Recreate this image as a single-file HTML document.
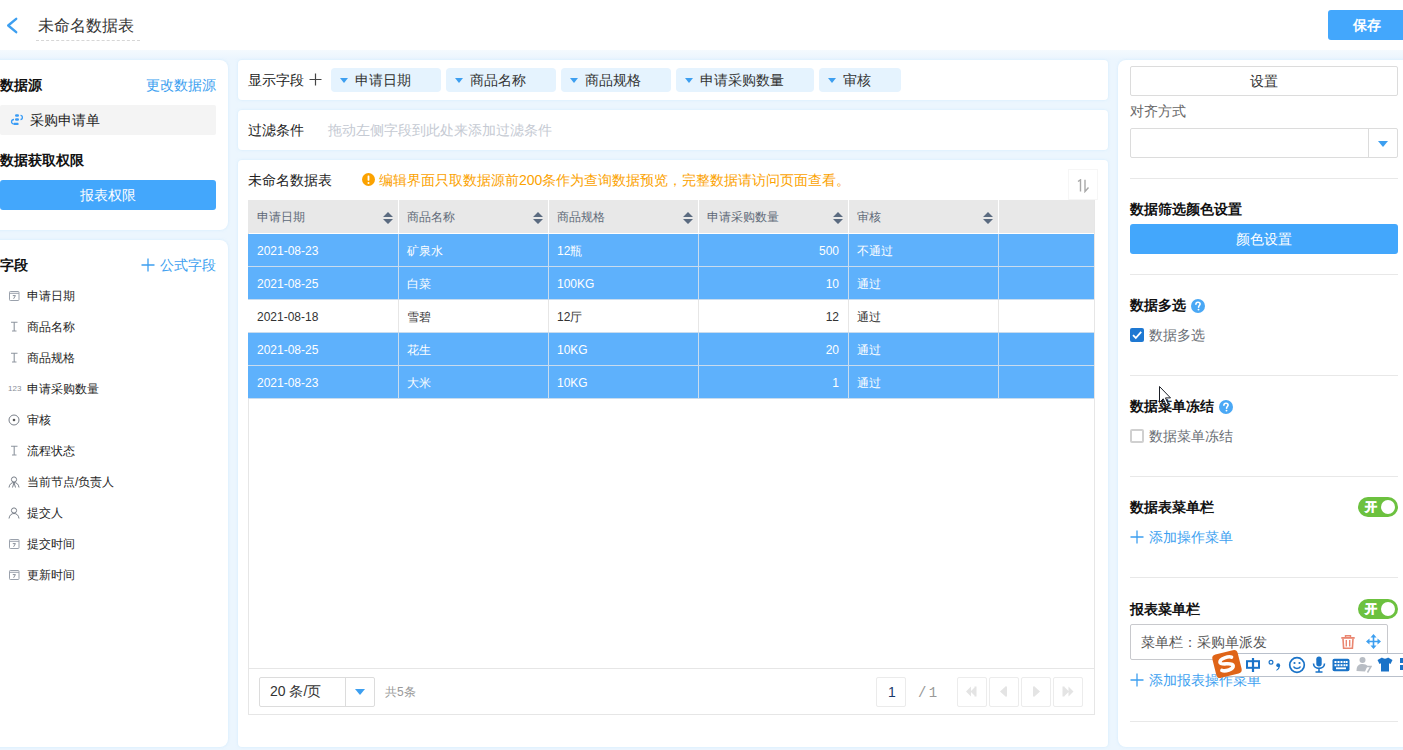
<!DOCTYPE html>
<html><head><meta charset="utf-8">
<style>
*{box-sizing:border-box;margin:0;padding:0}
html,body{width:1403px;height:750px;overflow:hidden}
body{position:relative;background:#ecf6fe;font-family:"Liberation Sans",sans-serif;color:#222;font-size:14px}
.abs{position:absolute}
#hdr{left:0;top:0;width:1403px;height:50px;background:#fff}
.panel{position:absolute;background:#fff;box-shadow:0 0 3px rgba(190,225,252,0.55)}
.t{position:absolute;white-space:nowrap;line-height:1}
.b{font-weight:bold;color:#111 !important}
.blue{color:#3d9ff0}
.btn{position:absolute;background:#43a7fc;color:#fff;border-radius:3px;text-align:center}
.chip{position:absolute;top:68px;height:24px;background:#e5f3fe;border-radius:4px;font-size:14px;line-height:24px;color:#333}
.chip i{position:absolute;left:9px;top:10px;width:0;height:0;border-left:4px solid transparent;border-right:4px solid transparent;border-top:5px solid #3d9ff0}
.chip span{position:absolute;left:24px;top:0}
.fi{position:absolute;left:0;height:20px;font-size:12px;line-height:20px;color:#1f1f1f}
.fi span{position:absolute;left:27px;top:0;white-space:nowrap}
.fi svg{position:absolute;left:8px;top:4px}
table{border-collapse:collapse;table-layout:fixed}
</style></head><body>
<div id="hdr" class="abs">
  <svg class="abs" style="left:6px;top:17px" width="12" height="17" viewBox="0 0 12 17"><path d="M10.2 1.8 L2.2 8.5 L10.2 15.2" fill="none" stroke="#3d9ff0" stroke-width="2.4" stroke-linecap="round" stroke-linejoin="round"/></svg>
  <div class="t" style="left:38px;top:18px;font-size:16px;color:#333">未命名数据表</div>
  <div class="abs" style="left:36px;top:40px;width:104px;border-top:1px dashed #d6d6d6"></div>
  <div class="btn" style="font-weight:bold;left:1328px;top:10px;width:80px;height:30px;line-height:30px;font-size:14px;text-indent:-3px">保存</div>
</div>

<div class="abs" style="left:0;top:50px;width:1403px;height:10px;background:linear-gradient(#f4fafe,#eaf5fe)"></div>
<!-- left panel 1 -->
<div class="panel" style="left:-12px;top:60px;width:240px;height:170px;border-radius:8px"></div>
<div class="t b" style="left:0;top:78px;font-size:14px;color:#222">数据源</div>
<div class="t blue" style="left:146px;top:78px;font-size:14px">更改数据源</div>
<div class="abs" style="left:0;top:105px;width:216px;height:30px;background:#f4f4f4;border-radius:2px"></div>
<svg class="abs" style="left:10px;top:113px" width="14" height="13" viewBox="0 0 14 13"><g fill="#3a9cf5"><rect x="5" y="1.2" width="4" height="2.6" rx="1.2"/><rect x="5" y="5.2" width="4" height="2.6" rx="1.2"/><rect x="3.5" y="9.8" width="5" height="2.2" rx="0.6"/></g><path d="M10.5 2.3 C13 2.3 13 6.5 10.5 6.5 M4 6.5 C0.8 6.5 0.8 10.9 3.5 10.9" fill="none" stroke="#3a9cf5" stroke-width="1.3"/></svg><div class="t" style="left:30px;top:113px;font-size:14px;color:#222">采购申请单</div>
<div class="t b" style="left:0;top:153px;font-size:14px;color:#222">数据获取权限</div>
<div class="btn" style="left:0;top:180px;width:216px;height:30px;line-height:30px;font-size:14px">报表权限</div>

<!-- left panel 2 -->
<div class="panel" style="left:-12px;top:240px;width:240px;height:507px;border-radius:8px"></div>
<div class="t b" style="left:0;top:258px;font-size:14px;color:#222">字段</div>
<svg class="abs" style="left:141px;top:258px" width="14" height="14" viewBox="0 0 14 14"><path d="M7 0.5 V13.5 M0.5 7 H13.5" stroke="#3d9ff0" stroke-width="1.3"/></svg><div class="t blue" style="left:160px;top:258px;font-size:14px">公式字段</div>
<div class="fi" style="top:286px"><svg width="12" height="11" viewBox="0 0 12 11"><rect x="1.5" y="1.5" width="9.5" height="9" rx="0.8" fill="none" stroke="#9aa1ac" stroke-width="1"/><line x1="1.5" y1="3.3" x2="11" y2="3.3" stroke="#9aa1ac" stroke-width="1"/><path d="M4.8 5.6 H7.4 L5.6 8.8" fill="none" stroke="#7d8490" stroke-width="0.9"/></svg><span>申请日期</span></div>
<div class="fi" style="top:317px"><svg width="12" height="11" viewBox="0 0 12 11"><path d="M3 1.2 H9.5 M6.2 1.2 V10 M4 10 H8.5" fill="none" stroke="#8f96a0" stroke-width="1.1"/></svg><span>商品名称</span></div>
<div class="fi" style="top:348px"><svg width="12" height="11" viewBox="0 0 12 11"><path d="M3 1.2 H9.5 M6.2 1.2 V10 M4 10 H8.5" fill="none" stroke="#8f96a0" stroke-width="1.1"/></svg><span>商品规格</span></div>
<div class="fi" style="top:379px"><span style="position:absolute;left:8px;top:0;font-size:8px;color:#8a8f99;letter-spacing:0">123</span><span>申请采购数量</span></div>
<div class="fi" style="top:410px"><svg width="12" height="12" viewBox="0 0 12 12"><circle cx="6" cy="6" r="5" fill="none" stroke="#7a808a" stroke-width="1"/><circle cx="6" cy="6" r="1.3" fill="#555"/></svg><span>审核</span></div>
<div class="fi" style="top:441px"><svg width="12" height="11" viewBox="0 0 12 11"><path d="M3 1.2 H9.5 M6.2 1.2 V10 M4 10 H8.5" fill="none" stroke="#8f96a0" stroke-width="1.1"/></svg><span>流程状态</span></div>
<div class="fi" style="top:472px"><svg width="12" height="12" viewBox="0 0 12 12"><circle cx="6" cy="3.5" r="2.6" fill="none" stroke="#7a808a" stroke-width="1"/><path d="M1 11.5 C1.5 8 3.5 6.5 6 6.5 C8.5 6.5 10.5 8 11 11.5 M6 6.5 L4.5 11.5 M6 6.5 L7.5 11.5" fill="none" stroke="#7a808a" stroke-width="1"/></svg><span>当前节点/负责人</span></div>
<div class="fi" style="top:503px"><svg width="12" height="12" viewBox="0 0 12 12"><circle cx="6" cy="3.5" r="2.6" fill="none" stroke="#7a808a" stroke-width="1"/><path d="M1 11.5 C1.5 8 3.5 6.5 6 6.5 C8.5 6.5 10.5 8 11 11.5" fill="none" stroke="#7a808a" stroke-width="1"/></svg><span>提交人</span></div>
<div class="fi" style="top:534px"><svg width="12" height="11" viewBox="0 0 12 11"><rect x="1.5" y="1.5" width="9.5" height="9" rx="0.8" fill="none" stroke="#9aa1ac" stroke-width="1"/><line x1="1.5" y1="3.3" x2="11" y2="3.3" stroke="#9aa1ac" stroke-width="1"/><path d="M4.8 5.6 H7.4 L5.6 8.8" fill="none" stroke="#7d8490" stroke-width="0.9"/></svg><span>提交时间</span></div>
<div class="fi" style="top:565px"><svg width="12" height="11" viewBox="0 0 12 11"><rect x="1.5" y="1.5" width="9.5" height="9" rx="0.8" fill="none" stroke="#9aa1ac" stroke-width="1"/><line x1="1.5" y1="3.3" x2="11" y2="3.3" stroke="#9aa1ac" stroke-width="1"/><path d="M4.8 5.6 H7.4 L5.6 8.8" fill="none" stroke="#7d8490" stroke-width="0.9"/></svg><span>更新时间</span></div>

<!-- middle -->
<div class="panel" style="left:238px;top:60px;width:870px;height:40px;border-radius:4px"></div>
<div class="t" style="left:248px;top:73px;font-size:14px">显示字段</div><svg class="abs" style="left:309px;top:73px" width="13" height="13" viewBox="0 0 13 13"><path d="M6.5 0.5 V12.5 M0.5 6.5 H12.5" stroke="#444" stroke-width="1.2"/></svg>
<div class="chip" style="left:331px;width:110px"><i></i><span>申请日期</span></div>
<div class="chip" style="left:446px;width:110px"><i></i><span>商品名称</span></div>
<div class="chip" style="left:561px;width:110px"><i></i><span>商品规格</span></div>
<div class="chip" style="left:676px;width:138px"><i></i><span>申请采购数量</span></div>
<div class="chip" style="left:819px;width:82px"><i></i><span>审核</span></div>

<div class="panel" style="left:238px;top:110px;width:870px;height:40px;border-radius:4px"></div>
<div class="t" style="left:248px;top:123px;font-size:14px">过滤条件</div>
<div class="t" style="left:328px;top:123px;font-size:14px;color:#c5cad3">拖动左侧字段到此处来添加过滤条件</div>

<div class="panel" style="left:238px;top:160px;width:870px;height:587px;border-radius:4px"></div>
<div class="t" style="left:248px;top:173px;font-size:14px">未命名数据表</div>
<div class="abs" style="left:248px;top:200px;width:847px;height:515px;border:1px solid #e6e6e6;border-top:none"></div>
<div class="abs" style="left:248px;top:200px;width:846px;height:33px;background:#e8e8e8"></div>
<div class="t" style="left:257px;top:211px;font-size:12px;color:#5f6a78">申请日期</div>
<div class="abs" style="left:383px;top:211px"><svg class="srt" width="10" height="12" viewBox="0 0 10 12"><path d="M5 0 L10 5 H0 Z M0 7 H10 L5 12 Z" fill="#5b6b80"/></svg></div>
<div class="t" style="left:407px;top:211px;font-size:12px;color:#5f6a78">商品名称</div>
<div class="abs" style="left:533px;top:211px"><svg class="srt" width="10" height="12" viewBox="0 0 10 12"><path d="M5 0 L10 5 H0 Z M0 7 H10 L5 12 Z" fill="#5b6b80"/></svg></div>
<div class="t" style="left:557px;top:211px;font-size:12px;color:#5f6a78">商品规格</div>
<div class="abs" style="left:683px;top:211px"><svg class="srt" width="10" height="12" viewBox="0 0 10 12"><path d="M5 0 L10 5 H0 Z M0 7 H10 L5 12 Z" fill="#5b6b80"/></svg></div>
<div class="t" style="left:707px;top:211px;font-size:12px;color:#5f6a78">申请采购数量</div>
<div class="abs" style="left:833px;top:211px"><svg class="srt" width="10" height="12" viewBox="0 0 10 12"><path d="M5 0 L10 5 H0 Z M0 7 H10 L5 12 Z" fill="#5b6b80"/></svg></div>
<div class="t" style="left:857px;top:211px;font-size:12px;color:#5f6a78">审核</div>
<div class="abs" style="left:983px;top:211px"><svg class="srt" width="10" height="12" viewBox="0 0 10 12"><path d="M5 0 L10 5 H0 Z M0 7 H10 L5 12 Z" fill="#5b6b80"/></svg></div>
<div class="abs" style="left:398px;top:200px;width:1px;height:33px;background:#fff"></div>
<div class="abs" style="left:548px;top:200px;width:1px;height:33px;background:#fff"></div>
<div class="abs" style="left:698px;top:200px;width:1px;height:33px;background:#fff"></div>
<div class="abs" style="left:848px;top:200px;width:1px;height:33px;background:#fff"></div>
<div class="abs" style="left:998px;top:200px;width:1px;height:33px;background:#fff"></div>
<div class="abs" style="left:248px;top:234px;width:846px;height:32px;background:#5eb1fc"></div>
<div class="t" style="left:257px;top:245px;font-size:12px;color:#fff">2021-08-23</div>
<div class="t" style="left:407px;top:245px;font-size:12px;color:#fff">矿泉水</div>
<div class="t" style="left:557px;top:245px;font-size:12px;color:#fff">12瓶</div>
<div class="t" style="left:698px;width:141px;text-align:right;top:245px;font-size:12px;color:#fff">500</div>
<div class="t" style="left:857px;top:245px;font-size:12px;color:#fff">不通过</div>
<div class="abs" style="left:398px;top:234px;width:1px;height:32px;background:#c9dcee"></div>
<div class="abs" style="left:548px;top:234px;width:1px;height:32px;background:#c9dcee"></div>
<div class="abs" style="left:698px;top:234px;width:1px;height:32px;background:#c9dcee"></div>
<div class="abs" style="left:848px;top:234px;width:1px;height:32px;background:#c9dcee"></div>
<div class="abs" style="left:998px;top:234px;width:1px;height:32px;background:#c9dcee"></div>
<div class="abs" style="left:248px;top:266px;width:846px;height:1px;background:#c9dcee"></div>
<div class="abs" style="left:248px;top:267px;width:846px;height:32px;background:#5eb1fc"></div>
<div class="t" style="left:257px;top:278px;font-size:12px;color:#fff">2021-08-25</div>
<div class="t" style="left:407px;top:278px;font-size:12px;color:#fff">白菜</div>
<div class="t" style="left:557px;top:278px;font-size:12px;color:#fff">100KG</div>
<div class="t" style="left:698px;width:141px;text-align:right;top:278px;font-size:12px;color:#fff">10</div>
<div class="t" style="left:857px;top:278px;font-size:12px;color:#fff">通过</div>
<div class="abs" style="left:398px;top:267px;width:1px;height:32px;background:#c9dcee"></div>
<div class="abs" style="left:548px;top:267px;width:1px;height:32px;background:#c9dcee"></div>
<div class="abs" style="left:698px;top:267px;width:1px;height:32px;background:#c9dcee"></div>
<div class="abs" style="left:848px;top:267px;width:1px;height:32px;background:#c9dcee"></div>
<div class="abs" style="left:998px;top:267px;width:1px;height:32px;background:#c9dcee"></div>
<div class="abs" style="left:248px;top:299px;width:846px;height:1px;background:#c9dcee"></div>
<div class="abs" style="left:248px;top:300px;width:846px;height:32px;background:#fff"></div>
<div class="t" style="left:257px;top:311px;font-size:12px;color:#333">2021-08-18</div>
<div class="t" style="left:407px;top:311px;font-size:12px;color:#333">雪碧</div>
<div class="t" style="left:557px;top:311px;font-size:12px;color:#333">12厅</div>
<div class="t" style="left:698px;width:141px;text-align:right;top:311px;font-size:12px;color:#333">12</div>
<div class="t" style="left:857px;top:311px;font-size:12px;color:#333">通过</div>
<div class="abs" style="left:398px;top:300px;width:1px;height:32px;background:#e6e6e6"></div>
<div class="abs" style="left:548px;top:300px;width:1px;height:32px;background:#e6e6e6"></div>
<div class="abs" style="left:698px;top:300px;width:1px;height:32px;background:#e6e6e6"></div>
<div class="abs" style="left:848px;top:300px;width:1px;height:32px;background:#e6e6e6"></div>
<div class="abs" style="left:998px;top:300px;width:1px;height:32px;background:#e6e6e6"></div>
<div class="abs" style="left:248px;top:332px;width:846px;height:1px;background:#c9dcee"></div>
<div class="abs" style="left:248px;top:333px;width:846px;height:32px;background:#5eb1fc"></div>
<div class="t" style="left:257px;top:344px;font-size:12px;color:#fff">2021-08-25</div>
<div class="t" style="left:407px;top:344px;font-size:12px;color:#fff">花生</div>
<div class="t" style="left:557px;top:344px;font-size:12px;color:#fff">10KG</div>
<div class="t" style="left:698px;width:141px;text-align:right;top:344px;font-size:12px;color:#fff">20</div>
<div class="t" style="left:857px;top:344px;font-size:12px;color:#fff">通过</div>
<div class="abs" style="left:398px;top:333px;width:1px;height:32px;background:#c9dcee"></div>
<div class="abs" style="left:548px;top:333px;width:1px;height:32px;background:#c9dcee"></div>
<div class="abs" style="left:698px;top:333px;width:1px;height:32px;background:#c9dcee"></div>
<div class="abs" style="left:848px;top:333px;width:1px;height:32px;background:#c9dcee"></div>
<div class="abs" style="left:998px;top:333px;width:1px;height:32px;background:#c9dcee"></div>
<div class="abs" style="left:248px;top:365px;width:846px;height:1px;background:#c9dcee"></div>
<div class="abs" style="left:248px;top:366px;width:846px;height:32px;background:#5eb1fc"></div>
<div class="t" style="left:257px;top:377px;font-size:12px;color:#fff">2021-08-23</div>
<div class="t" style="left:407px;top:377px;font-size:12px;color:#fff">大米</div>
<div class="t" style="left:557px;top:377px;font-size:12px;color:#fff">10KG</div>
<div class="t" style="left:698px;width:141px;text-align:right;top:377px;font-size:12px;color:#fff">1</div>
<div class="t" style="left:857px;top:377px;font-size:12px;color:#fff">通过</div>
<div class="abs" style="left:398px;top:366px;width:1px;height:32px;background:#c9dcee"></div>
<div class="abs" style="left:548px;top:366px;width:1px;height:32px;background:#c9dcee"></div>
<div class="abs" style="left:698px;top:366px;width:1px;height:32px;background:#c9dcee"></div>
<div class="abs" style="left:848px;top:366px;width:1px;height:32px;background:#c9dcee"></div>
<div class="abs" style="left:998px;top:366px;width:1px;height:32px;background:#c9dcee"></div>
<div class="abs" style="left:248px;top:398px;width:846px;height:1px;background:#c9dcee"></div>
<div class="abs" style="left:248px;top:668px;width:846px;height:1px;background:#e6e6e6"></div>
<div class="abs" style="left:259px;top:677px;width:116px;height:30px;border:1px solid #dcdcdc;border-radius:2px;background:#fff"></div>
<div class="abs" style="left:345px;top:678px;width:1px;height:28px;background:#dcdcdc"></div>
<div class="abs" style="left:355px;top:689px;width:0;height:0;border-left:5px solid transparent;border-right:5px solid transparent;border-top:6px solid #3d9ff0"></div>
<div class="t" style="left:270px;top:684px;font-size:14px;color:#333">20 条/页</div>
<div class="t" style="left:385px;top:686px;font-size:12px;color:#999">共5条</div>
<div class="abs" style="left:876px;top:677px;width:30px;height:30px;border:1px solid #ebebeb;border-radius:2px;background:#fff"></div>
<div class="t" style="left:877px;width:30px;text-align:center;top:685px;font-size:14px;color:#1a3a6a">1</div>
<div class="t" style="left:918px;top:686px;font-size:14px;color:#999;font-family:'Liberation Mono',monospace;letter-spacing:-3px">/ 1</div>




<div class="abs" style="left:957px;top:677px;width:30px;height:30px;border:1px solid #ececec;border-radius:2px;background:#fff"><svg class="abs" style="left:-1px;top:-1px" width="30" height="30" viewBox="0 0 30 30"><path d="M9 14.5 L14 9.5 V19.5 Z M13.5 14.5 L18.5 9.5 V19.5 Z M17.5 9.5 H19.5 V19.5 H17.5 Z" fill="#e4e4e4"/></svg></div>
<div class="abs" style="left:989px;top:677px;width:30px;height:30px;border:1px solid #ececec;border-radius:2px;background:#fff"><svg class="abs" style="left:-1px;top:-1px" width="30" height="30" viewBox="0 0 30 30"><path d="M11 14.5 L16.5 9.5 V19.5 Z M16 9.5 H18 V19.5 H16 Z" fill="#e4e4e4"/></svg></div>
<div class="abs" style="left:1021px;top:677px;width:30px;height:30px;border:1px solid #ececec;border-radius:2px;background:#fff"><svg class="abs" style="left:-1px;top:-1px" width="30" height="30" viewBox="0 0 30 30"><path d="M12 9.5 H14 V19.5 H12 Z M13.5 9.5 L19 14.5 L13.5 19.5 Z" fill="#e4e4e4"/></svg></div>
<div class="abs" style="left:1053px;top:677px;width:30px;height:30px;border:1px solid #ececec;border-radius:2px;background:#fff"><svg class="abs" style="left:-1px;top:-1px" width="30" height="30" viewBox="0 0 30 30"><path d="M9.5 9.5 H11.5 V19.5 H9.5 Z M11 9.5 L16 14.5 L11 19.5 Z M15.5 9.5 L20.5 14.5 L15.5 19.5 Z" fill="#e4e4e4"/></svg></div>
<svg class="abs" style="left:362px;top:173px" width="13" height="13" viewBox="0 0 13 13"><circle cx="6.5" cy="6.5" r="6.5" fill="#fba200"/><rect x="5.6" y="2.5" width="1.8" height="5.2" rx="0.6" fill="#fff"/><circle cx="6.5" cy="9.9" r="1" fill="#fff"/></svg>
<div class="t" style="left:379px;top:173px;font-size:14px;color:#fba200">编辑界面只取数据源前200条作为查询数据预览，完整数据请访问页面查看。</div>
<div class="abs" style="left:1068px;top:169px;width:30px;height:31px;border:1px solid #f6f6f6;background:#fff"><svg class="abs" style="left:7px;top:9px" width="14" height="14" viewBox="0 0 14 14"><path d="M2 2.5 L4.5 0.8 V12.5" fill="none" stroke="#a8a8a8" stroke-width="1.4"/><path d="M9 0.8 V12.5 L12.5 8.5" fill="none" stroke="#a8a8a8" stroke-width="1.4"/></svg></div>

<!-- right panel -->
<div class="panel" style="left:1118px;top:60px;width:300px;height:687px;border-radius:8px"></div>
<div class="abs" style="left:1130px;top:66px;width:268px;height:30px;border:1px solid #dcdcdc;border-radius:2px;background:#fff"></div>
<div class="t" style="left:1130px;width:268px;text-align:center;top:74px;font-size:14px;color:#333">设置</div>
<div class="t" style="left:1130px;top:104px;font-size:14px;color:#666">对齐方式</div>
<div class="abs" style="left:1130px;top:128px;width:268px;height:30px;border:1px solid #dcdcdc;border-radius:2px;background:#fff"></div>
<div class="abs" style="left:1368px;top:129px;width:1px;height:28px;background:#dcdcdc"></div>
<div class="abs" style="left:1378px;top:141px;width:0;height:0;border-left:5px solid transparent;border-right:5px solid transparent;border-top:6px solid #3d9ff0"></div>
<div class="abs" style="left:1130px;top:178px;width:268px;height:1px;background:#e8e8e8"></div>
<div class="abs" style="left:1130px;top:274px;width:268px;height:1px;background:#e8e8e8"></div>
<div class="abs" style="left:1130px;top:375px;width:268px;height:1px;background:#e8e8e8"></div>
<div class="abs" style="left:1130px;top:476px;width:268px;height:1px;background:#e8e8e8"></div>
<div class="abs" style="left:1130px;top:577px;width:268px;height:1px;background:#e8e8e8"></div>
<div class="abs" style="left:1130px;top:721px;width:268px;height:1px;background:#e8e8e8"></div>
<div class="t b" style="left:1130px;top:202px;font-size:14px;color:#222">数据筛选颜色设置</div>
<div class="btn" style="left:1130px;top:224px;width:268px;height:30px;line-height:30px;font-size:14px">颜色设置</div>
<div class="t b" style="left:1130px;top:298px;font-size:14px;color:#222">数据多选</div>
<svg class="abs" style="left:1191px;top:299px" width="14" height="14" viewBox="0 0 14 14"><circle cx="7" cy="7" r="7" fill="#4aa8f5"/><path d="M4.9 5.3 C4.9 3.9 5.9 3.2 7 3.2 C8.2 3.2 9.1 4 9.1 5.1 C9.1 6.4 7.6 6.6 7.6 8 V8.3" fill="none" stroke="#fff" stroke-width="1.6" stroke-linecap="round"/><circle cx="7.5" cy="10.6" r="0.95" fill="#fff"/></svg>
<div class="abs" style="left:1130px;top:328px;width:14px;height:14px;border-radius:2px;background:#1e78d2"><svg class="abs" style="left:1px;top:1px" width="12" height="12" viewBox="0 0 12 12"><path d="M2 6.2 L4.8 9 L10.2 2.8" fill="none" stroke="#fff" stroke-width="1.8"/></svg></div>
<div class="t" style="left:1149px;top:328px;font-size:14px;color:#6b6f76">数据多选</div>
<div class="t b" style="left:1130px;top:399px;font-size:14px;color:#222">数据菜单冻结</div>
<svg class="abs" style="left:1219px;top:400px" width="14" height="14" viewBox="0 0 14 14"><circle cx="7" cy="7" r="7" fill="#4aa8f5"/><path d="M4.9 5.3 C4.9 3.9 5.9 3.2 7 3.2 C8.2 3.2 9.1 4 9.1 5.1 C9.1 6.4 7.6 6.6 7.6 8 V8.3" fill="none" stroke="#fff" stroke-width="1.6" stroke-linecap="round"/><circle cx="7.5" cy="10.6" r="0.95" fill="#fff"/></svg>
<div class="abs" style="left:1130px;top:429px;width:14px;height:14px;border:2px solid #d0d0d0;border-radius:2px;background:#fff"></div>
<div class="t" style="left:1149px;top:429px;font-size:14px;color:#6b6f76">数据菜单冻结</div>
<div class="t b" style="left:1130px;top:500px;font-size:14px;color:#222">数据表菜单栏</div>
<div class="abs" style="left:1358px;top:497px;width:40px;height:20px;border-radius:10px;background:#6cc13f"><div class="t" style="font-weight:bold;-webkit-text-stroke:0.5px #fff;left:7px;top:4px;font-size:12px;color:#fff">开</div><div class="abs" style="left:23px;top:3px;width:14px;height:14px;border-radius:50%;background:#fff"></div></div>
<svg class="abs" style="left:1130px;top:530px" width="14" height="14" viewBox="0 0 14 14"><path d="M7 0.5 V13.5 M0.5 7 H13.5" stroke="#3d9ff0" stroke-width="1.3"/></svg>
<div class="t blue" style="left:1149px;top:530px;font-size:14px">添加操作菜单</div>
<div class="t b" style="left:1130px;top:602px;font-size:14px;color:#222">报表菜单栏</div>
<div class="abs" style="left:1358px;top:599px;width:40px;height:20px;border-radius:10px;background:#6cc13f"><div class="t" style="font-weight:bold;-webkit-text-stroke:0.5px #fff;left:7px;top:4px;font-size:12px;color:#fff">开</div><div class="abs" style="left:23px;top:3px;width:14px;height:14px;border-radius:50%;background:#fff"></div></div>
<div class="abs" style="left:1130px;top:624px;width:258px;height:36px;border:1px solid #c8c9cd;border-radius:2px;background:#fff"></div>
<div class="t" style="left:1141px;top:635px;font-size:14px;color:#555">菜单栏：采购单派发</div>
<svg class="abs" style="left:1341px;top:635px" width="14" height="14" viewBox="0 0 14 14"><path d="M4.5 2 V0.8 H9.5 V2" fill="none" stroke="#ea8670" stroke-width="1.4"/><rect x="0.3" y="2" width="13.4" height="1.8" fill="#ea8670"/><path d="M2 3.8 L2.6 13.2 H11.4 L12 3.8" fill="none" stroke="#ea8670" stroke-width="1.6"/><path d="M5.3 5 V11.5 M8.7 5 V11.5" stroke="#ea8670" stroke-width="1.4"/></svg>
<svg class="abs" style="left:1366px;top:634px" width="15" height="15" viewBox="0 0 15 15"><path d="M7.5 0 L10.5 3.5 H4.5 Z M7.5 15 L4.5 11.5 H10.5 Z M0 7.5 L3.5 4.5 V10.5 Z M15 7.5 L11.5 10.5 V4.5 Z" fill="#3d9ff0"/><path d="M7.5 2 V13 M2 7.5 H13" stroke="#3d9ff0" stroke-width="1.6"/></svg>
<svg class="abs" style="left:1130px;top:673px" width="14" height="14" viewBox="0 0 14 14"><path d="M7 0.5 V13.5 M0.5 7 H13.5" stroke="#3d9ff0" stroke-width="1.3"/></svg>
<div class="t blue" style="left:1149px;top:673px;font-size:14px">添加报表操作菜单</div>


<!-- cursor -->
<svg class="abs" style="left:1158px;top:385px" width="14" height="22" viewBox="0 0 14 22"><path d="M1.5 1.5 V17.5 L5.2 13.8 L8 19.9 L10.2 18.9 L7.5 12.9 H12.5 Z" fill="#fff" stroke="#1b1f27" stroke-width="1" stroke-linejoin="miter"/></svg>
<!-- IME toolbar -->
<div class="abs" style="left:1225px;top:653px;width:190px;height:24px;background:#fff;border:1px solid #b9c0cb;border-right:none"></div>
<svg class="abs" style="left:1210px;top:648px" width="34" height="32" viewBox="0 0 34 32"><g transform="rotate(-14 17 16)"><rect x="4" y="4" width="26" height="24" rx="4" fill="#df6418"/><path d="M23 10.5 C21 8.8 11 8.6 10.6 12.8 C10.3 16.2 22.8 15 22.6 19 C22.3 23 13 23 10.5 21" fill="none" stroke="#fff" stroke-width="3.6" stroke-linecap="round"/></g></svg>
<svg class="abs" style="left:1245px;top:657px" width="16" height="16" viewBox="0 0 16 16"><rect x="2" y="4.2" width="12" height="6.6" fill="none" stroke="#1a73c8" stroke-width="2"/><path d="M8 1 V15" stroke="#1a73c8" stroke-width="2.2"/></svg>
<svg class="abs" style="left:1268px;top:659px" width="14" height="13" viewBox="0 0 14 13"><circle cx="3" cy="3.2" r="1.9" fill="none" stroke="#1a73c8" stroke-width="1.2"/><circle cx="10.2" cy="6.2" r="1.9" fill="#1a73c8"/><path d="M12 6.3 C12 9 10.8 10.8 8.6 11.8 L8.2 11 C9.6 10.2 10.3 9 10.4 7.8 Z" fill="#1a73c8"/></svg>
<svg class="abs" style="left:1288px;top:656px" width="18" height="18" viewBox="0 0 18 18"><circle cx="9" cy="9" r="7.3" fill="none" stroke="#1a73c8" stroke-width="1.7"/><circle cx="6.5" cy="7" r="1.1" fill="#1a73c8"/><circle cx="11.5" cy="7" r="1.1" fill="#1a73c8"/><path d="M5.5 10.5 C6.5 13 11.5 13 12.5 10.5" fill="none" stroke="#1a73c8" stroke-width="1.5"/></svg>
<svg class="abs" style="left:1312px;top:656px" width="14" height="17" viewBox="0 0 14 17"><rect x="4.3" y="0.5" width="5.4" height="10" rx="2.7" fill="#1a73c8"/><path d="M1.5 7.5 C1.5 14 12.5 14 12.5 7.5 M7 12.5 V15.5 M3.5 16 H10.5" fill="none" stroke="#1a73c8" stroke-width="1.6"/></svg>
<svg class="abs" style="left:1332px;top:658px" width="18" height="14" viewBox="0 0 18 14"><rect x="0.5" y="0.8" width="17" height="12.4" rx="1.8" fill="#1a73c8"/><g fill="#fff"><rect x="2.5" y="3" width="2" height="2"/><rect x="5.5" y="3" width="2" height="2"/><rect x="8.5" y="3" width="2" height="2"/><rect x="11.5" y="3" width="2" height="2"/><rect x="14" y="3" width="1.6" height="2"/><rect x="2.5" y="6.2" width="2" height="2"/><rect x="5.5" y="6.2" width="2" height="2"/><rect x="8.5" y="6.2" width="2" height="2"/><rect x="11.5" y="6.2" width="2" height="2"/><rect x="14" y="6.2" width="1.6" height="2"/><rect x="4" y="9.4" width="10" height="1.8"/></g></svg>
<svg class="abs" style="left:1356px;top:656px" width="16" height="17" viewBox="0 0 16 17"><circle cx="6.5" cy="4" r="3" fill="#b8bdc4"/><path d="M0.5 15 C0.5 9.5 3 8 6.5 8 C9 8 10.5 8.8 11.5 10 L9 15.5 Z" fill="#b8bdc4"/><path d="M10 10.5 H15 L11.5 16.5" fill="none" stroke="#b8bdc4" stroke-width="1.5"/></svg>
<svg class="abs" style="left:1377px;top:657px" width="16" height="15" viewBox="0 0 16 15"><path d="M5 0.5 C6 2 10 2 11 0.5 L15.5 3 L13.5 7 L12 6.3 V14.5 H4 V6.3 L2.5 7 L0.5 3 Z" fill="#1a73c8"/></svg>
<div class="abs" style="left:1400px;top:658px;width:5px;height:5px;background:#1a73c8"></div>
<div class="abs" style="left:1400px;top:665px;width:5px;height:5px;background:#1a73c8"></div>
</body></html>
